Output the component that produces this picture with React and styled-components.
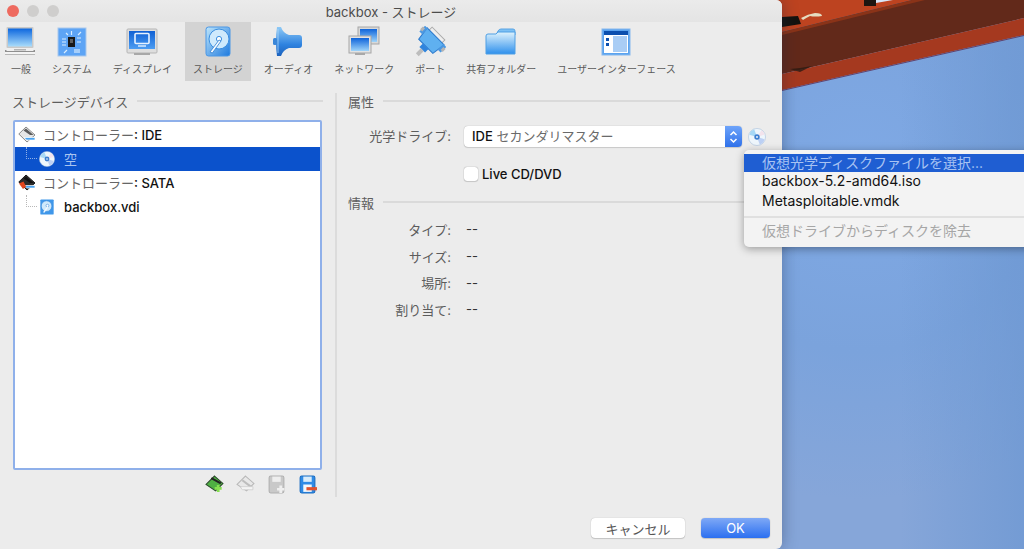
import React from "react";
import styled, { createGlobalStyle } from "styled-components";

const FONT = `Inter, "Noto Sans CJK JP", "Liberation Sans", sans-serif`;

const GlobalStyle = createGlobalStyle`
  html, body { margin: 0; padding: 0; background: #7ca6e0; }
  body { font-family: ${FONT}; font-size: 13px; color: #1a1a1a; overflow: hidden; }
`;

const Screen = styled.div`
  position: relative;
  width: 1024px;
  height: 549px;
  overflow: hidden;
`;
const WallpaperSvg = styled.svg`
  position: absolute;
  inset: 0;
  width: 1024px;
  height: 549px;
`;
const Window = styled.div`
  position: relative;
  width: 782px;
  height: 549px;
  background: #ececec;
  border-radius: 0 6px 6px 0;
  box-shadow: 0 0 16px rgba(30, 40, 70, 0.4);
  display: flex;
  flex-direction: column;
`;
const TitleBar = styled.div`
  height: 22px;
  display: grid;
  grid-template-columns: 1fr auto 1fr;
  align-items: center;
  background: linear-gradient(#ebebeb, #e4e4e4);
  border-radius: 0 6px 0 0;
`;
const Lights = styled.div`
  display: flex;
  gap: 8px;
  padding-left: 7px;
`;
const Light = styled.span`
  width: 12px;
  height: 12px;
  border-radius: 50%;
  background: ${(p) => (p.$red ? "#ee6a5f" : "#cfcecd")};
`;
const Title = styled.div`
  font-size: 13px;
  color: #4c4c4c;
`;
const Toolbar = styled.div`
  display: flex;
  gap: 5px;
  padding-left: 3px;
  height: 59px;
`;
const ToolItem = styled.div`
  display: flex;
  flex-direction: column;
  align-items: center;
  padding: 4px 8px 0;
  background: ${(p) => (p.$active ? "#d3d3d3" : "transparent")};
`;
const ToolIcon = styled.svg`
  width: 32px;
  height: 32px;
  flex: none;
  margin: 0 -8px;
`;
const ToolLabel = styled.span`
  margin-top: 4px;
  font-size: 10px;
  line-height: 15px;
  color: #5a5a5a;
  white-space: nowrap;
`;
const Body = styled.div`
  display: flex;
  height: 404px;
  margin-top: 12px;
  padding-left: 12px;
`;
const LeftPane = styled.div`
  width: 311px;
  display: flex;
  flex-direction: column;
`;
const Divider = styled.div`
  width: 2px;
  margin: 0 11px 0 12px;
  background: #dcdcdc;
`;
const RightPane = styled.div`
  width: 422px;
  display: flex;
  flex-direction: column;
`;
const SectionHead = styled.div`
  display: flex;
  align-items: center;
  gap: 9px;
  height: 16px;
  font-size: 13px;
  color: #5e5e5e;
  margin-top: ${(p) => p.$top || 0}px;
  &::after {
    content: "";
    flex: 1;
    height: 2px;
    background: #dadada;
  }
`;
const Tree = styled.div`
  width: 309px;
  height: 350px;
  box-sizing: border-box;
  margin: 11px 0 0 1px;
  padding-top: 1px;
  background: #fff;
  border: 2px solid #8fb0ea;
  border-radius: 2px;
`;
const TreeRow = styled.div`
  height: 24px;
  box-sizing: border-box;
  display: flex;
  align-items: center;
  padding-left: ${(p) => (p.$child ? 11 : 3)}px;
  padding-bottom: 1px;
  background: ${(p) => (p.$selected ? "#0b52cc" : "transparent")};
  color: ${(p) => (p.$selected ? "#a9c4f0" : "#666")};
`;
const Branch = styled.span`
  align-self: flex-start;
  width: 11px;
  height: 12px;
  box-sizing: border-box;
  border-left: 1px dotted ${(p) => (p.$selected ? "#8fb0e8" : "#b8b8b8")};
  border-bottom: 1px dotted ${(p) => (p.$selected ? "#8fb0e8" : "#b8b8b8")};
  margin-right: 2px;
`;
const TreeIcon = styled.svg`
  width: ${(p) => p.$size}px;
  height: ${(p) => p.$size}px;
  flex: none;
  margin-right: ${(p) => p.$gap}px;
`;
const Latin = styled.span`
  color: #111;
  font-weight: 500;
`;
const TreeActions = styled.div`
  display: flex;
  justify-content: flex-end;
  gap: 12px;
  margin-top: 5px;
  padding-right: 6px;
`;
const ActionIcon = styled.svg`
  width: 19px;
  height: 19px;
`;
const FormRow = styled.div`
  display: flex;
  align-items: center;
  margin-top: 17px;
`;
const FieldLabel = styled.span`
  width: 103px;
  margin-right: 13px;
  padding-bottom: 2px;
  text-align: right;
  color: #5c5c5c;
  white-space: nowrap;
`;
const Select = styled.div`
  width: 278px;
  height: 21px;
  display: flex;
  align-items: center;
  justify-content: space-between;
  background: #fff;
  border-radius: 4px;
  padding-left: 8px;
  box-sizing: border-box;
  box-shadow: 0 0 1px rgba(0, 0, 0, 0.35), 0 1px 1px rgba(0, 0, 0, 0.12);
  color: #6a6a6a;
`;
const SelectText = styled.span`
  padding-bottom: 2px;
`;
const Stepper = styled.span`
  width: 17px;
  height: 21px;
  display: flex;
  align-items: center;
  justify-content: center;
  border-radius: 0 4px 4px 0;
  background: linear-gradient(#6ea4fa, #2f71ea);
`;
const DiscButton = styled.svg`
  width: 18px;
  height: 18px;
  margin-left: 6px;
`;
const CheckRow = styled.label`
  display: flex;
  align-items: center;
  gap: 4px;
  margin: 19px 0 0 116px;
  height: 16px;
`;
const Check = styled.span`
  width: 14px;
  height: 14px;
  background: #fff;
  border-radius: 3px;
  box-shadow: 0 0 1px rgba(0, 0, 0, 0.5), 0 1px 1px rgba(0, 0, 0, 0.12);
`;
const InfoGrid = styled.div`
  display: grid;
  grid-template-columns: 103px auto;
  column-gap: 15px;
  grid-auto-rows: 26.7px;
  align-items: center;
  margin-top: 6px;
`;
const InfoLabel = styled.span`
  text-align: right;
  color: #5c5c5c;
`;
const InfoValue = styled.span`
  color: #333;
`;
const Footer = styled.div`
  display: flex;
  justify-content: flex-end;
  gap: 16px;
  padding: 21px 12px 0 0;
`;
const Button = styled.div`
  width: ${(p) => p.$width}px;
  height: 20px;
  display: flex;
  align-items: center;
  justify-content: center;
  border-radius: 4px;
  font-size: 13px;
  color: ${(p) => (p.$primary ? "#fff" : "#555")};
  background: ${(p) => (p.$primary ? "linear-gradient(#7fa9f6, #2b6ff0)" : "#fff")};
  box-shadow: 0 0 1px rgba(0, 0, 0, 0.3), 0 1px 1px rgba(0, 0, 0, 0.15);
`;
const Menu = styled.div`
  position: absolute;
  left: 744px;
  top: 150px;
  width: 290px;
  height: 97px;
  box-sizing: border-box;
  padding-top: 4px;
  background: #f3f3f3;
  border-radius: 5px;
  box-shadow: 0 2px 8px rgba(0, 0, 0, 0.35);
  font-size: 14px;
`;
const MenuItem = styled.div`
  height: 19.5px;
  box-sizing: border-box;
  padding-bottom: 2px;
  display: flex;
  align-items: center;
  padding-left: 18px;
  white-space: nowrap;
  color: ${(p) => (p.$disabled ? "#a6a6a6" : "#111")};
`;
const MenuHighlight = styled(MenuItem)`
  height: 18px;
  padding-bottom: 3px;
  background: #1f5ed2;
  color: #a8c3f2;
`;
const MenuSeparator = styled.div`
  height: 2px;
  margin: 4.5px 0 4px;
  background: #e0e0e0;
`;

const Wallpaper = () => (
  <WallpaperSvg viewBox="0 0 1024 549">
    <defs>
      <radialGradient id="sky" gradientUnits="userSpaceOnUse" cx="860" cy="170" r="330">
        <stop offset="0" stopColor="#7fa9e5" />
        <stop offset="0.55" stopColor="#7ba3dc" />
        <stop offset="1" stopColor="#86a6d9" />
      </radialGradient>
      <linearGradient id="skyRight" gradientUnits="userSpaceOnUse" x1="900" y1="0" x2="1024" y2="0">
        <stop offset="0" stopColor="#6c97d2" stopOpacity="0" />
        <stop offset="1" stopColor="#6c97d2" stopOpacity="0.7" />
      </linearGradient>
    </defs>
    <rect width="1024" height="549" fill="url(#sky)" />
    <rect x="900" width="124" height="549" fill="url(#skyRight)" />
    <polygon points="0,0 912,0 782,32 700,52 0,52" fill="#bd4320" />
    <polygon points="782,32 912,0 1024,0 1024,18 782,74" fill="#62291a" />
    <polygon points="782,32 912,0 925,0 782,35" fill="#8a3318" />
    <polygon points="782,74 1024,18 1024,35 782,90" fill="#a5391f" />
    <polyline points="782,90.5 1024,35.5" stroke="#5a2a50" strokeWidth="0.8" fill="none" />
    <polygon points="782,17 798,16 801,24 782,27" fill="#14130f" />
    <path d="M801 18 Q808 14 815 13 Q822 13 822 16 Q815 17 810 16 Q806 18 803 20 Z" fill="#e5dcc0" />
    <rect x="864" y="0" width="12" height="6" fill="#1d1510" />
    <polygon points="876,0 893,0 876,3" fill="#d9e6f7" />
    <polygon points="790,69 800,68 812,66 800,72" fill="#2c1a12" opacity="0.8" />
  </WallpaperSvg>
);

const LaptopIcon = () => (
  <ToolIcon viewBox="1 0 32 32">
    <defs>
      <linearGradient id="lapScreen" x1="0" y1="0" x2="0" y2="1">
        <stop offset="0" stopColor="#0d67de" />
        <stop offset="1" stopColor="#a9dcfb" />
      </linearGradient>
    </defs>
    <rect x="2.5" y="1" width="27" height="21" rx="1" fill="#c9c9c9" />
    <rect x="4" y="2.5" width="24" height="18" fill="url(#lapScreen)" />
    <path d="M1 24h30v5H1z" fill="#8f8f8f" />
    <path d="M2.5 22h27v3h-27z" fill="#efefef" />
    <path d="M1 26h30v2.4H1z" fill="#f3f3f3" />
    <rect x="10" y="23" width="12" height="1.5" fill="#b4b4b4" />
  </ToolIcon>
);

const SystemIcon = () => (
  <ToolIcon viewBox="0 0 32 32">
    <rect x="2" y="2" width="28" height="28" fill="#5da4f5" stroke="#a9c8ec" />
    <rect x="12" y="11" width="7" height="10" fill="#191919" />
    <rect x="14" y="13" width="3" height="4" fill="#5e5e5e" />
    <g stroke="#d7ecff" strokeWidth="1.2">
      <path d="M15.5 5v4M6 13h4M6 16h4M6 19h4M21 12h4M21 16h4M8 27l3-3M22 9l3-3M10 7l2 2" />
      <path d="M19 23v4M21 23v4M23 23v4" />
    </g>
  </ToolIcon>
);

const DisplayIcon = () => (
  <ToolIcon viewBox="0 0 32 32">
    <defs>
      <linearGradient id="dspScreen" x1="0" y1="0" x2="0" y2="1">
        <stop offset="0" stopColor="#0f60d4" />
        <stop offset="1" stopColor="#4d9df2" />
      </linearGradient>
    </defs>
    <rect x="1" y="3" width="30" height="24" rx="1" fill="#dedede" stroke="#b5b5b5" />
    <rect x="3" y="5" width="26" height="18" fill="url(#dspScreen)" />
    <rect x="9" y="7.5" width="14" height="10" rx="1" fill="none" stroke="#e6f2ff" strokeWidth="1.6" />
    <path d="M12 20h8" stroke="#e6f2ff" strokeWidth="1.4" />
    <rect x="8" y="27" width="16" height="2" fill="#a8a8a8" />
  </ToolIcon>
);

const StorageIcon = () => (
  <ToolIcon viewBox="0 0 32 32">
    <defs>
      <linearGradient id="stoBox" x1="0" y1="0" x2="1" y2="1">
        <stop offset="0" stopColor="#bfe6fb" />
        <stop offset="1" stopColor="#1e7ade" />
      </linearGradient>
    </defs>
    <rect x="4" y="1" width="24" height="29" rx="2.5" fill="url(#stoBox)" stroke="#4a97e6" />
    <circle cx="17" cy="13" r="10" fill="#cfeafc" stroke="#3c8fe0" />
    <circle cx="17" cy="13" r="2.6" fill="#fff" stroke="#3c8fe0" />
    <path d="M17 14L8 26l2.4 1L19 15z" fill="#f6fbff" stroke="#2f7fd2" strokeWidth="0.8" />
  </ToolIcon>
);

const AudioIcon = () => (
  <ToolIcon viewBox="0 0 32 32">
    <defs>
      <linearGradient id="audHorn" x1="0" y1="0" x2="0" y2="1">
        <stop offset="0" stopColor="#8fcaf6" />
        <stop offset="0.6" stopColor="#2f83e0" />
        <stop offset="1" stopColor="#1c62bd" />
      </linearGradient>
    </defs>
    <path d="M5 1h4q2 6 8 8h10q3 0 3 3v7q0 3-3 3H17q-6 2-8 8H5q-1-7-1-14.5T5 1z" fill="url(#audHorn)" />
    <rect x="1" y="12" width="4" height="7" rx="1.5" fill="#3a86d8" />
    <path d="M6 3v24" stroke="#bfe2fb" strokeWidth="1" opacity="0.7" />
  </ToolIcon>
);

const NetworkIcon = () => (
  <ToolIcon viewBox="0 0 32 32">
    <defs>
      <linearGradient id="netScreen" x1="0" y1="0" x2="0" y2="1">
        <stop offset="0" stopColor="#0f64da" />
        <stop offset="1" stopColor="#9ed4fa" />
      </linearGradient>
    </defs>
    <rect x="10" y="1" width="21" height="17" fill="#d8d8d8" stroke="#a6a6a6" />
    <rect x="12" y="3" width="17" height="13" fill="url(#netScreen)" />
    <rect x="1" y="10" width="22" height="17" fill="#e2e2e2" stroke="#a6a6a6" />
    <rect x="3" y="12" width="18" height="13" fill="url(#netScreen)" />
    <rect x="7" y="27" width="10" height="2" fill="#a8a8a8" />
  </ToolIcon>
);

const PortIcon = () => (
  <ToolIcon viewBox="0 0 32 32">
    <g transform="rotate(45 16 16)">
      <rect x="7" y="-1" width="18" height="5" fill="#eeeeee" stroke="#aaa" transform="translate(0 5)" />
      <path d="M4 8h24l-2 14H6z" fill="#5fb0f0" stroke="#2a78cc" />
      <rect x="1" y="8" width="4" height="8" fill="#4b98e2" />
      <rect x="27" y="8" width="4" height="8" fill="#4b98e2" />
      <rect x="0" y="10" width="3" height="4" fill="#b4b4b4" />
      <rect x="29" y="10" width="3" height="4" fill="#b4b4b4" />
      <rect x="12" y="22" width="8" height="5" fill="#2f84dd" />
      <rect x="14" y="27" width="4" height="7" fill="#bdbdbd" />
    </g>
  </ToolIcon>
);

const FolderIcon = () => (
  <ToolIcon viewBox="0 0 32 32">
    <defs>
      <linearGradient id="fldBody" x1="0" y1="0" x2="0" y2="1">
        <stop offset="0" stopColor="#dff3fd" />
        <stop offset="1" stopColor="#2e90ec" />
      </linearGradient>
    </defs>
    <path d="M13 5q1-2 3-2h12q2 0 2 2v4H11z" fill="#7cc0f4" stroke="#5aa4e4" />
    <path d="M1 10q0-2 2-2h8l2-2h17v22H1z" fill="url(#fldBody)" stroke="#4f9fe4" />
  </ToolIcon>
);

const InterfaceIcon = () => (
  <ToolIcon viewBox="0 0 32 32">
    <rect x="2" y="3" width="28" height="26" fill="#5ba3ef" stroke="#85b8ee" />
    <rect x="4" y="5" width="24" height="22" fill="#fff" />
    <rect x="4" y="5" width="24" height="4" fill="#0c4fae" />
    <rect x="13" y="10" width="14" height="16" fill="#a9cdf5" />
    <rect x="6" y="12" width="3" height="3" fill="#0c4fae" />
    <rect x="6" y="17" width="3" height="3" fill="#0c4fae" />
  </ToolIcon>
);

const Diamond = ({ dark }) => (
  <>
    <path d="M8 1L17 9l-8 7L0.8 8z" fill={dark ? "#2c2c2c" : "#e6e6e6"} stroke={dark ? "#1a1a1a" : "#8a8a8a"} />
    <path d="M8 2.5L15.5 9H12L5.5 4.5z" fill={dark ? "#111" : "#5c5c5c"} />
    <path d="M6 11.5h11v2.6H8.5z" fill="#4aa3ef" stroke="#fff" strokeWidth="0.7" />
    {dark && <path d="M1 9.5l4.5-2 2.5 5-3 2.4z" fill="#e2451d" />}
  </>
);

const DiscGlyph = () => (
  <>
    <circle cx="8" cy="8" r="7.6" fill="#eef6fc" stroke="#a6bfdc" strokeWidth="0.5" />
    <path d="M8 8L5.5 1.2A7.2 7.2 0 0 0 1.2 6z" fill="#a7d8f5" />
    <path d="M8 8l2.5 6.8A7.2 7.2 0 0 0 14.8 10z" fill="#bcd0f4" />
    <path d="M8 8l6.8-2.2A7.2 7.2 0 0 0 12 2z" fill="#f3e3ec" />
    <circle cx="8" cy="8" r="2.4" fill="#3d7fd0" />
    <circle cx="8" cy="8" r="0.8" fill="#fff" />
  </>
);

const VdiGlyph = () => (
  <>
    <rect x="1" y="0.5" width="15" height="17" rx="1" fill="#3f97ea" />
    <circle cx="8" cy="8" r="6" fill="#cfe9fb" stroke="#2f82d8" strokeWidth="0.7" />
    <circle cx="9" cy="7.5" r="1.6" fill="#fff" stroke="#2f82d8" strokeWidth="0.6" />
    <path d="M9 8L4 15l1.6.6L10 9z" fill="#f2f9ff" />
  </>
);

const Chevrons = () => (
  <svg width="9" height="14" viewBox="0 0 9 14">
    <path d="M1.5 5L4.5 2l3 3M1.5 9l3 3 3-3" fill="none" stroke="#fff" strokeWidth="1.5" />
  </svg>
);

const toolItems = [
  ["一般", LaptopIcon],
  ["システム", SystemIcon],
  ["ディスプレイ", DisplayIcon],
  ["ストレージ", StorageIcon, true],
  ["オーディオ", AudioIcon],
  ["ネットワーク", NetworkIcon],
  ["ポート", PortIcon],
  ["共有フォルダー", FolderIcon],
  ["ユーザーインターフェース", InterfaceIcon],
];

export default function App() {
  return (
    <Screen>
      <GlobalStyle />
      <Wallpaper />
      <Window>
        <TitleBar>
          <Lights>
            <Light $red />
            <Light />
            <Light />
          </Lights>
          <Title>backbox - ストレージ</Title>
        </TitleBar>
        <Toolbar>
          {toolItems.map(([label, Icon, active]) => (
            <ToolItem key={label} $active={active}>
              <Icon />
              <ToolLabel>{label}</ToolLabel>
            </ToolItem>
          ))}
        </Toolbar>
        <Body>
          <LeftPane>
            <SectionHead>ストレージデバイス</SectionHead>
            <Tree>
              <TreeRow>
                <TreeIcon $size={18} $gap={7} viewBox="0 0 18 18">
                  <Diamond />
                </TreeIcon>
                コントローラー<Latin>: IDE</Latin>
              </TreeRow>
              <TreeRow $child $selected>
                <Branch $selected />
                <TreeIcon $size={16} $gap={9} viewBox="0 0 16 16">
                  <DiscGlyph />
                </TreeIcon>
                空
              </TreeRow>
              <TreeRow>
                <TreeIcon $size={18} $gap={7} viewBox="0 0 18 18">
                  <Diamond dark />
                </TreeIcon>
                コントローラー<Latin>: SATA</Latin>
              </TreeRow>
              <TreeRow $child>
                <Branch />
                <TreeIcon $size={16} $gap={9} viewBox="0 0 17 18">
                  <VdiGlyph />
                </TreeIcon>
                <Latin>backbox.vdi</Latin>
              </TreeRow>
            </Tree>
            <TreeActions>
              <ActionIcon viewBox="0 0 18 18">
                <path d="M9 1L17 8l-7 7L1 9z" fill="#4fb043" stroke="#2b4a2b" />
                <path d="M6 3l9 5" stroke="#222" strokeWidth="2" />
                <path d="M12.5 9.5v6.5M9.2 12.7h6.6" stroke="#86e050" strokeWidth="2.6" />
              </ActionIcon>
              <ActionIcon viewBox="0 0 18 18">
                <path d="M9 1L17 8l-7 7L1 9z" fill="#e8e8e8" stroke="#b8b8b8" />
                <path d="M6 5l8 6" stroke="#bdbdbd" strokeWidth="2" />
                <path d="M4 11h12v3H6z" fill="#f4f4f4" stroke="#c4c4c4" strokeWidth="0.6" />
              </ActionIcon>
              <ActionIcon viewBox="0 0 18 18">
                <rect x="2" y="1" width="14" height="16" rx="1.5" fill="#c9c9c9" stroke="#b0b0b0" />
                <rect x="5" y="1.5" width="8" height="5" fill="#eeeeee" />
                <path d="M13 10v7M9.5 13.5h7" stroke="#efefef" strokeWidth="2.6" />
              </ActionIcon>
              <ActionIcon viewBox="0 0 18 18">
                <rect x="2" y="1" width="14" height="16" rx="1.5" fill="#2f8be6" stroke="#1b6cc0" />
                <rect x="5" y="1.5" width="8" height="5" fill="#d8ecfb" />
                <rect x="5" y="9" width="8" height="7" fill="#f2f8fd" />
                <rect x="8" y="11.5" width="10" height="3" fill="#e0532f" />
              </ActionIcon>
            </TreeActions>
          </LeftPane>
          <Divider />
          <RightPane>
            <SectionHead>属性</SectionHead>
            <FormRow>
              <FieldLabel>光学ドライブ:</FieldLabel>
              <Select>
                <SelectText>
                  <Latin>IDE</Latin> セカンダリマスター
                </SelectText>
                <Stepper>
                  <Chevrons />
                </Stepper>
              </Select>
              <DiscButton viewBox="0 0 16 16">
                <DiscGlyph />
              </DiscButton>
            </FormRow>
            <CheckRow>
              <Check />
              <Latin>Live CD/DVD</Latin>
            </CheckRow>
            <SectionHead $top={12}>情報</SectionHead>
            <InfoGrid>
              {["タイプ:", "サイズ:", "場所:", "割り当て:"].map((label) => (
                <React.Fragment key={label}>
                  <InfoLabel>{label}</InfoLabel>
                  <InfoValue>--</InfoValue>
                </React.Fragment>
              ))}
            </InfoGrid>
          </RightPane>
        </Body>
        <Footer>
          <Button $width={94}>キャンセル</Button>
          <Button $width={69} $primary>
            OK
          </Button>
        </Footer>
      </Window>
      <Menu>
        <MenuHighlight>仮想光学ディスクファイルを選択...</MenuHighlight>
        <MenuItem>backbox-5.2-amd64.iso</MenuItem>
        <MenuItem>Metasploitable.vmdk</MenuItem>
        <MenuSeparator />
        <MenuItem $disabled>仮想ドライブからディスクを除去</MenuItem>
      </Menu>
    </Screen>
  );
}
